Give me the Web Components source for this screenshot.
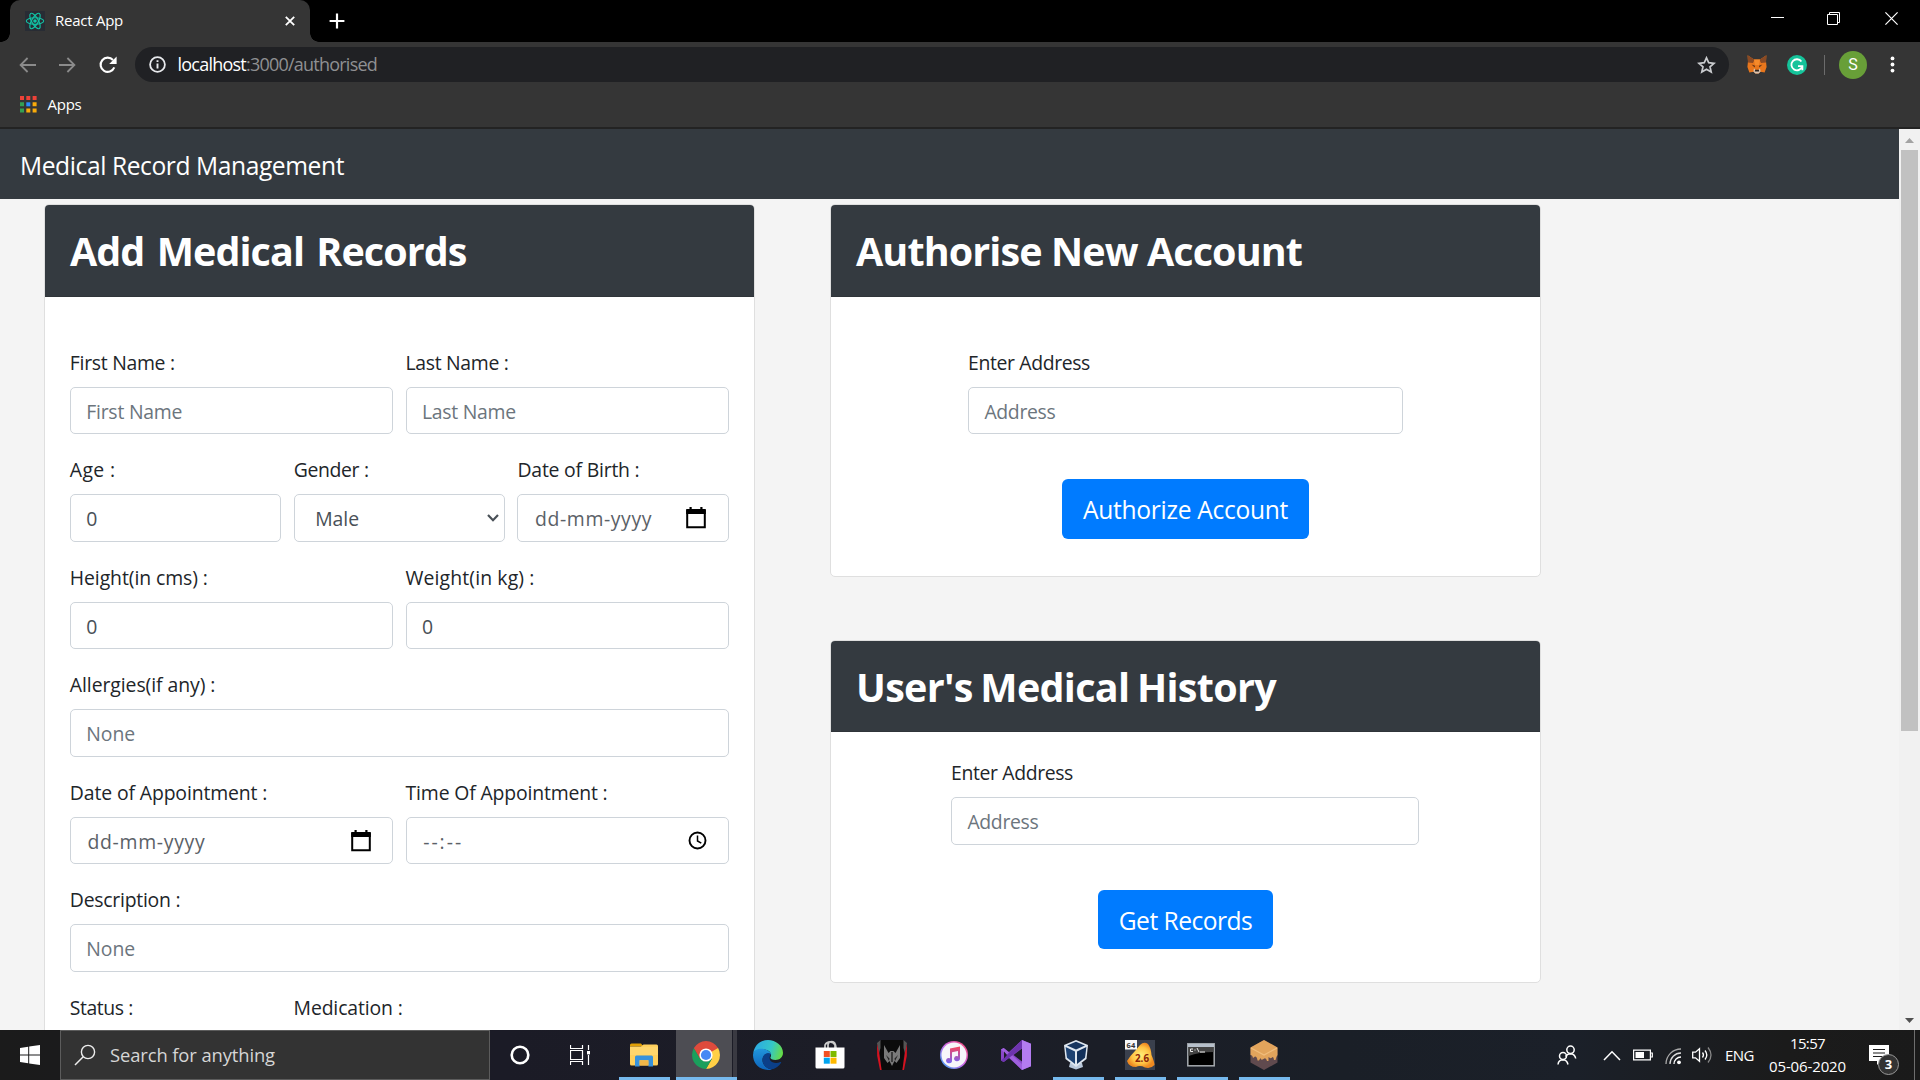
<!DOCTYPE html>
<html lang="en">
<head>
<meta charset="utf-8">
<title>React App</title>
<style>
html,body{margin:0;height:100%;overflow:hidden}
body{font-family:"Open Sans","Noto Sans",sans-serif;background:#f4f4f4}
</style>
</head>
<body>
<desktop-screen></desktop-screen>
<script>
const define=(name,html,extra)=>{
  const t=document.createElement('template');t.innerHTML=html;
  customElements.define(name,class extends HTMLElement{
    connectedCallback(){
      if(!this.shadowRoot){
        this.attachShadow({mode:'open'}).appendChild(t.content.cloneNode(true));
        if(extra)extra(this,this.shadowRoot);
      }
    }
  });
};

/* Text run spaced out to a given width */
define('fit-text',`<style>:host{display:inline-block;white-space:pre;flex:none}</style><span></span>`,(el,r)=>{
  const s=r.querySelector('span'),w=+el.getAttribute('w');
  s.textContent=el.getAttribute('t');
  const n=s.getBoundingClientRect().width;
  if(w&&n)s.style.letterSpacing=((w-n)/s.textContent.length)+'px';
  if(w)el.style.width=w+'px';
});

const ICONS={
react:[20,20,`<rect width="20" height="20" fill="#282c34"/><g fill="none" stroke="#12c2a4" stroke-width="1.15"><ellipse cx="10" cy="10" rx="8.7" ry="3.3"/><ellipse cx="10" cy="10" rx="8.7" ry="3.3" transform="rotate(60 10 10)"/><ellipse cx="10" cy="10" rx="8.7" ry="3.3" transform="rotate(120 10 10)"/></g><circle cx="10" cy="10" r="1.8" fill="#12c2a4"/>`],
x:[10,10,`<path d="M.8.8 9.2 9.2M9.2.8.8 9.2" stroke="#fff" stroke-width="1.8"/>`],
plus:[16,16,`<path d="M8 .6V15.4M.6 8H15.4" stroke="#fff" stroke-width="2.2"/>`],
min:[13,13,`<path d="M0 5.5H13" stroke="#fff"/>`],
restore:[13,13,`<path d="M.5 2.5H10.5V12.5H.5ZM2.5 2.5V.5H12.5V10.5H10.5" fill="none" stroke="#fff"/>`],
close:[13,13,`<path d="M.4.4 12.6 12.6M12.6.4.4 12.6" stroke="#fff" stroke-width="1.2"/>`],
back:[17,16,`<path d="M17 8H1.8M8.6 1 1.6 8 8.6 15" fill="none" stroke="#8b8b8b" stroke-width="1.8"/>`],
fwd:[17,16,`<path d="M0 8H15.2M8.4 1 15.4 8 8.4 15" fill="none" stroke="#8b8b8b" stroke-width="1.8"/>`],
reload:[18,18,`<path d="M15.3 11.4A7.1 7.1 0 1 1 14 4" fill="none" stroke="#fff" stroke-width="2.1"/><path d="M17.6.6V8H10.2Z" fill="#fff"/>`],
info:[17,17,`<circle cx="8.5" cy="8.5" r="7.4" fill="none" stroke="#e8eaed" stroke-width="1.8"/><path d="M8.5 7.4V12.6M8.5 4.2V6" stroke="#e8eaed" stroke-width="1.9"/>`],
star:[19,18,`<path d="M9.5 1.8 11.7 6.7 17 7.3 13 10.8 14.2 16 9.5 13.2 4.8 16 6 10.8 2 7.3 7.3 6.7Z" fill="none" stroke="#c9cbce" stroke-width="1.7"/>`],
fox:[20,19,`<path d="M.6.3 7 4.6H13L19.4.3 19 6.3 19.6 12 17.6 17.6 13.4 16.8 11.6 18.5H8.4L6.6 16.8 2.4 17.6.4 12 1 6.3Z" fill="#e8761c"/><path d="M.6.3 7.6 4.7 6 8 1 7.4ZM19.4.3 12.4 4.7 14 8 19 7.4Z" fill="#8a4a24"/><path d="M4.6 9.6 8 10.8 7.6 12.4ZM15.4 9.6 12 10.8 12.4 12.4Z" fill="#553018"/><path d="M7 13.2 8.5 15H11.5L13 13.2 13.6 16.6 11.6 18.5H8.4L6.4 16.6Z" fill="#d9c3b0"/><path d="M8.2 14.8H11.8L12.2 16.6H7.8Z" fill="#2b2420"/><path d="M7 4.6H13L12 10H8Z" fill="#f58a2a"/>`],
gram:[20,20,`<circle cx="10" cy="10" r="10" fill="#15c39a"/><path d="M14.4 6.6A5.5 5.5 0 1 0 15.2 11.2H11M15.4 11V15.2" fill="none" stroke="#fff" stroke-width="1.8"/>`],
dots:[5,17,`<g fill="#fff"><circle cx="2.5" cy="2.4" r="1.9"/><circle cx="2.5" cy="8.5" r="1.9"/><circle cx="2.5" cy="14.6" r="1.9"/></g>`],
apps:[17,17,`<g><path d="M0 0h4v4H0zM6.3 0h4v4h-4zM12.6 0h4v4h-4z" fill="#ee4238"/><path d="M0 6.3h4v4H0zM0 12.6h4v4H0z" fill="#34a053"/><path d="M6.3 6.3h4v4h-4z" fill="#2a8cff"/><path d="M12.6 6.3h4v4h-4zM6.3 12.6h4v4h-4zM12.6 12.6h4v4h-4z" fill="#f9ab0a"/></g>`],
up:[9,5,`<path d="M0 5 4.5 0 9 5Z" fill="#a3a3a3"/>`],
down:[9,5,`<path d="M0 0 4.5 5 9 0Z" fill="#505050"/>`],
cal:[20,22,`<path d="M1.2 4H18.8V20.2H1.2Z" fill="none" stroke="#000" stroke-width="2"/><path d="M.2 2H19.8V7H.2Z" fill="#000"/><path d="M4.6 0V3M15.4 0V3" stroke="#000" stroke-width="2.2"/>`],
clock:[19,19,`<circle cx="9.5" cy="9.5" r="8" fill="none" stroke="#000" stroke-width="1.9"/><path d="M9.5 4.6V10L13.3 12.2" fill="none" stroke="#000" stroke-width="1.5"/>`],
chev:[12,8,`<path d="M1 1 6 6.2 11 1" fill="none" stroke="#495057" stroke-width="2.2"/>`],
win:[20,20,`<path d="M0 2.9 8.2 1.8V9.5H0ZM9.2 1.6 20 0V9.5H9.2ZM0 10.5H8.2V18.2L0 17.1ZM9.2 10.5H20V20L9.2 18.4Z" fill="#fff"/>`],
search:[22,22,`<circle cx="14" cy="8" r="6.6" fill="none" stroke="#eee" stroke-width="1.4"/><path d="M9.2 12.8 1 21" stroke="#eee" stroke-width="1.5"/>`],
cortana:[20,20,`<circle cx="10" cy="10" r="8.3" fill="none" stroke="#fff" stroke-width="2.6"/>`],
task:[20,20,`<path d="M.5 0V3.5H12.5V0M.5 20V16.5H12.5V20M.5 5.5H12.5V14.5H.5ZM18.5 0V5M18.5 10V20" fill="none" stroke="#fff" stroke-width="1.2"/><path d="M17 6h3v3.4h-3z" fill="#fff"/>`],
folder:[28,24,`<path d="M0 2Q0 .5 1.5.5H11L13.5 3.5H0Z" fill="#e09f06"/><path d="M0 3.5H11L13.5 1.5H26.5Q28 1.5 28 3V21Q28 22.5 26.5 22.5H1.5Q0 22.5 0 21Z" fill="#ffd05c"/><path d="M0 4H28V12H0Z" fill="#ffdc7c" opacity=".5"/><path d="M5 23.5V14Q5 12.5 6.5 12.5H21.5Q23 12.5 23 14V23.5H18.4V17.3H9.6V23.5Z" fill="#3792dc"/><path d="M9.6 17.3H18.4V22.5H9.6Z" fill="#f2b848"/>`],
chrome:[28,28,`<path d="M14 14 1.9 7A14 14 0 0 1 26.1 7Z" fill="#de4b3c"/><path d="M14 14V7H26.1A14 14 0 0 1 14 28L20 17.5Z" fill="#ffcf45"/><path d="M14 28A14 14 0 0 1 1.9 7L8 17.5 14 21 20 17.5Z" fill="#1a9f5c"/><path d="M14 7H26.1L14 14 8 17.5 1.9 7Z" fill="#de4b3c"/><circle cx="14" cy="14" r="6.6" fill="#fff"/><circle cx="14" cy="14" r="5.1" fill="#4688f4"/>`],
edge:[30,30,`<defs><linearGradient id="e1" x1="0" x2="1" y1=".3" y2=".5"><stop stop-color="#2ba9e4"/><stop offset=".6" stop-color="#35c6c8"/><stop offset="1" stop-color="#66dc48"/></linearGradient><linearGradient id="e2" x2="0" y2="1"><stop stop-color="#2196dc"/><stop offset="1" stop-color="#0d63ba"/></linearGradient></defs><path d="M.3 13.5C1 5.5 7.300 0 15 0S30 5.600 30 12.800C30 17.500 26.500 20 22.500 20 19.300 20 17.200 18.800 17.400 17.600 18.600 15.500 18.400 12 14.500 10.300 9 8 2 9.500.3 13.500Z" fill="url(#e1)"/><path d="M0 15C.2 10 5 8.500 9 8.800 14 9.200 17.500 12 18.500 14.500 14 11.500 9.500 15 9.500 20 9.500 25 14 29 19 29.400 8.500 32 0 24.500 0 15Z" fill="url(#e2)"/><path d="M18 14C13.500 12 9.500 15 9.500 20 9.500 26 15.500 30 20.500 29 24 27.800 26.800 25.300 28.200 22.600 28.400 22.100 28 21.800 27.500 22 20.500 25 13.500 20.500 18 14Z" fill="#0b3f88"/>`],
store:[30,30,`<path d="M10 9V6A5.500 5.500 0 0 1 20 6V9M13 9V5.500Q13.500 2.500 17 2.500 20.500 2.500 21 9" fill="none" stroke="#ccc" stroke-width="1.7"/><path d="M.5 8.500H29.500V28Q29.500 29.500 28 29.500H2Q.5 29.500.5 28Z" fill="#fff"/><path d="M8.800 12h6v6h-6z" fill="#f25022"/><path d="M15.500 12h6v6h-6z" fill="#7fba00"/><path d="M8.800 18.700h6v6h-6z" fill="#00a4ef"/><path d="M15.500 18.700h6v6h-6z" fill="#ffb900"/>`],
pred:[30,30,`<path d="M4 0H26L28 4 25.500 30H4.500L2 4Z" fill="#0b0b0b"/><path d="M0 3 3.500 0V8L1.800 14ZM30 3 26.500 0V8L28.200 14Z" fill="#555"/><path d="M0 4 2 12 4.600 30H3L.2 16ZM30 4 28 12 25.400 30H27L29.800 16Z" fill="#d6121f"/><path d="M7 5 11.500 13 13.500 11H16.500L18.500 13 23 5V18L19.500 23 17.500 21 15 26 12.500 21 10.500 23 7 18Z" fill="#797979"/><path d="M9 15 12.500 18.500 12 21ZM21 15 17.500 18.500 18 21ZM14.300 12H15.700V22H14.300Z" fill="#222"/>`],
itunes:[28,28,`<defs><linearGradient id="i1" x1="1" x2="0" y1="0" y2="1"><stop stop-color="#fb4569"/><stop offset=".5" stop-color="#c968e8"/><stop offset="1" stop-color="#29a9f5"/></linearGradient><linearGradient id="i2" x2="0" y2="1"><stop stop-color="#f8455e"/><stop offset="1" stop-color="#7565f5"/></linearGradient></defs><circle cx="14" cy="14" r="14" fill="url(#i1)"/><circle cx="14" cy="14" r="12.500" fill="#f6f5fa"/><path d="M10 7.500 20 5.500V17.500A3 2.600 0 1 1 18 15.300V10L12 11.200V19.500A3 2.600 0 1 1 10 17.200Z" fill="url(#i2)"/>`],
vs:[30,30,`<path d="M21 0 30 3.700V26.300L21 30 8 18 2.700 22 0 20.600V9.400L2.700 8 8 12Z" fill="#8a47c9"/><path d="M21 0 30 3.700V26.300L21 30Z" fill="#b37cf0"/><path d="M0 9.400 2.700 8 21 24V30Z" fill="#9f61dd"/><path d="M21 0V8L2.700 22 0 20.600Z" fill="#6d34ae"/><path d="M21 8.600V21.400L12.500 15ZM3 11.500 6 15 3 18.500Z" fill="#1c1d27"/>`],
vbox:[26,30,`<path d="M7 23H19L20 27 13 29.500 6 27Z" fill="#b8c7da"/><path d="M13 0 25 5 23.500 19 13 27 2.500 19 1 5Z" fill="#dfe7f0"/><path d="M13 1.800 22 5.400 13 9.600 4 5.400Z" fill="#17355f"/><path d="M2.600 7 12 11.500V24L4 17.800Z" fill="#1d4272"/><path d="M23.400 7 14 11.500V24L22 17.800Z" fill="#12305a"/>`],
blend:[30,30,`<defs><radialGradient id="b1"><stop stop-color="#fff07a"/><stop offset=".65" stop-color="#ffc444"/><stop offset="1" stop-color="#ef8a21"/></radialGradient></defs><rect width="30" height="30" fill="#3a404d"/><path d="M15 5Q19 1 23 4 26 8 26.500 15 29.500 22 29.500 25 26 29 20 27.500 15 25 11 27 4 27 2 21 5 16 10 11Z" fill="url(#b1)"/><rect width="12" height="9.500" fill="#f7f7f7"/><text x="1.600" y="7.700" font-family="Open Sans" font-weight="700" font-size="7.500" fill="#333">64</text><text x="10" y="22.400" font-family="Open Sans" font-weight="700" font-size="9.800" fill="#8b2409">2.6</text>`],
cmd:[28,24,`<rect x=".8" y=".8" width="26.400" height="22" fill="#000" stroke="#a6abb0" stroke-width="1.500"/><path d="M1 1H27V4H1Z" fill="#b7c0cb"/><path d="M1.600 4H26.400V9Q12 9 1.600 13Z" fill="#444"/><path d="M3.500 6H6M3.500 8.500H6M3.500 6V8.500M8 6.500V7.500M10 5 12 9M13 9H18" stroke="#eee" fill="none"/>`],
gan:[28,30,`<path d="M14 0 27.500 7.500V22.500L14 30 .5 22.500V7.500Z" fill="#604a4e"/><path d="M14 0 27.500 7.500V15Q26 17 25.500 20H24Q23.500 16 22 17.500T18.500 17V21H17Q16 17 13.500 19T10.500 18L9 20.500H7.500Q7 16.500 5 16.500L3 18Q2.500 15 .5 15V7.500Z" fill="#e2a45c"/><path d="M1 8 14 15 27 8" fill="none" stroke="#f0bd7c" stroke-width="1.200"/>`],
people:[20,20,`<g fill="none" stroke="#fff" stroke-width="1.500"><circle cx="13.500" cy="4.800" r="3.700"/><path d="M8.500 11.500Q10.500 8.700 13.500 8.700 18 9 18.700 13.500"/><circle cx="6" cy="11" r="3.500"/><path d="M1 19.500Q1.500 15 6 14.800 10 15 11 19.500"/></g>`],
caret:[18,11,`<path d="M1 10 9 1.800 17 10" fill="none" stroke="#fff" stroke-width="1.500"/>`],
batt:[20,12,`<path d="M.6 1.100H17.400V10.900H.6ZM17.400 4H19.300V8H17.400" fill="none" stroke="#fff" stroke-width="1.200"/><path d="M2.500 3H11V9H2.500Z" fill="#fff"/>`],
wifi:[17,17,`<g fill="none" stroke-width="1.300"><path d="M1 16A15 15 0 0 1 16 1" stroke="#aaa"/><path d="M5 16A11 11 0 0 1 16 5" stroke="#ddd"/><path d="M9 16A7 7 0 0 1 16 9" stroke="#fff"/></g><circle cx="14" cy="14.300" r="1.900" fill="#fff"/>`],
vol:[21,18,`<g fill="none" stroke="#fff" stroke-width="1.300"><path d="M.7 6.200H3.500L7.500 2.700V15.300L3.500 11.800H.7Z"/><path d="M10.500 6.500Q12.500 9 10.500 11.500M13 4.500Q16.600 9 13 13.500"/><path d="M16 1.500Q22 9 16 16.500" stroke="#888"/></g>`],
note:[20,20,`<path d="M0 0H20V16H12L8 20V16H0Z" fill="#fff"/><path d="M4 4.500H16M4 8H16M4 11.500H16" stroke="#1c1c1c" stroke-width="1.200"/>`]
};
define('ui-icon',`<style>:host{display:block;flex:none}svg{display:block}</style>`,(el,r)=>{
  const [w,h,s]=ICONS[el.getAttribute('name')];
  const d=document.createElement('div');
  d.innerHTML=`<svg width="${w}" height="${h}" viewBox="0 0 ${w} ${h}">${s}</svg>`;
  r.appendChild(d);
});

define('browser-tabs',`<style>
:host{display:flex;height:42px;background:#000;color:#fff}
.tab{position:relative;margin-left:10px;width:300px;height:42px;background:#353535;border-radius:10px 10px 0 0;display:flex;align-items:center;box-sizing:border-box;padding:0 15px}
.tab:before,.tab:after{content:"";position:absolute;bottom:0;width:9px;height:9px}
.tab:before{left:-9px;background:radial-gradient(circle at 0 0,#000 8.500px,#353535 9px)}
.tab:after{right:-9px;background:radial-gradient(circle at 100% 0,#000 8.500px,#353535 9px)}
fit-text{margin-left:10px;font-size:15px;line-height:20px;margin-top:-2px}
.tab ui-icon:last-child{margin-left:auto}
.plus{margin:13px 0 0 19px}
.win{margin:12px 22px 0 auto;display:flex;gap:44px}
.win ui-icon:nth-child(2){margin-right:1px}.win ui-icon:nth-child(1){margin-right:-1px}
</style>
<div class="tab"><ui-icon name="react"></ui-icon><fit-text t="React App" w="68"></fit-text><ui-icon name="x"></ui-icon></div>
<ui-icon class="plus" name="plus"></ui-icon>
<div class="win"><ui-icon name="min"></ui-icon><ui-icon name="restore"></ui-icon><ui-icon name="close"></ui-icon></div>`);

define('browser-toolbar',`<style>
:host{display:flex;height:45px;background:#353535;align-items:center;box-sizing:border-box;padding:0 25px 0 19px}
.nav{display:flex;align-items:center;gap:23px;width:116px}
.omni{display:flex;align-items:center;width:1594px;height:35px;border-radius:18px;background:#202124;box-sizing:border-box;padding:0 13.500px 0 14px;font-size:18px;line-height:24px;color:#fff}
.omni fit-text{margin-top:-2px}
.omni fit-text:nth-of-type(1){margin-left:11.500px}
.path{color:#8f9092}
.star{margin-left:auto}
.ext{display:flex;align-items:center;flex:1;margin-left:17.500px}
.sep{width:1px;height:20px;background:#6c6c6c;margin:0 14px 0 17.500px}
.av{width:28px;height:28px;border-radius:50%;background:#689f38;color:#fff;font:16px/28px Roboto,sans-serif;text-align:center}
.dots{margin-left:auto}
</style>
<div class="nav"><ui-icon name="back"></ui-icon><ui-icon name="fwd"></ui-icon><ui-icon name="reload"></ui-icon></div>
<div class="omni"><ui-icon name="info"></ui-icon><fit-text t="localhost" w="68.500"></fit-text><fit-text class="path" t=":3000/authorised" w="131"></fit-text><ui-icon class="star" name="star"></ui-icon></div>
<div class="ext"><ui-icon name="fox"></ui-icon><ui-icon name="gram" style="margin-left:20px"></ui-icon><div class="sep"></div><div class="av">S</div><ui-icon class="dots" name="dots"></ui-icon></div>`);

define('bookmark-bar',`<style>
:host{display:flex;height:42px;background:#353535;border-bottom:2px solid #232323;box-sizing:border-box;padding:8px 20px 0;color:#fff;font-size:15px;line-height:20px}
ui-icon{margin-top:1px}fit-text{margin-left:10.500px;margin-top:-1px}
</style><ui-icon name="apps"></ui-icon><fit-text t="Apps" w="34"></fit-text>`);

define('page-scrollbar',`<style>
:host{display:flex;flex-direction:column;align-items:center;width:21px;background:#f1f1f1;justify-content:space-between}
.t{display:flex;flex-direction:column;align-items:center;gap:7px;padding-top:9px}
.th{width:17px;height:581px;background:#c1c1c1}
.d{padding-bottom:7px}
</style><div class="t"><ui-icon name="up"></ui-icon><div class="th"></div></div><ui-icon class="d" name="down"></ui-icon>`);

define('nav-bar',`<style>
:host{display:flex;height:70px;background:#343a40;color:#fff;padding-left:20px;box-sizing:border-box;font-size:24.600px;line-height:34px;padding-top:20px}
</style><fit-text t="Medical Record Management" w="324"></fit-text>`);

define('record-card',`<style>
:host{display:block;box-sizing:border-box;width:711px;background:#fff;border:1px solid #dfdfdf;border-radius:5px}
header{height:var(--head,92px);box-sizing:border-box;background:#343a40;border-bottom:1px solid #2f3439;border-radius:4px 4px 0 0;padding:18px 25px 0;color:#fff;font-weight:700;font-size:39.500px;line-height:56px;word-spacing:var(--gap,0)}
.body{padding:0 25px}
</style><header></header><div class="body"><slot></slot></div>`,(el,r)=>{
  r.querySelector('header').innerHTML=`<fit-text t="${el.getAttribute('heading')}" w="${el.getAttribute('hw')}"></fit-text>`;
});

define('form-row',`<style>:host{display:flex;gap:12.500px;height:107.500px;margin:0 .2px 0 -.2px}::slotted(*){flex:1}</style><slot></slot>`);

define('form-field',`<style>
:host{display:block;min-width:0}
label{display:block;height:40px;font-size:19.400px;line-height:31px;color:#212529;white-space:nowrap}
.in{display:flex;align-items:center;box-sizing:border-box;height:47.500px;border:1px solid #ced4da;border-radius:5px;background:#fff;padding:0 21px 0 15.400px;font-size:19.400px;line-height:30px;color:#6c757d}
.in.v,.in.s,.in.d,.in.t{color:#495057}
.in.s{padding:0 5px 0 20.500px}
.in.d,.in.t{color:#5b6167;padding:0 21.500px 0 16.600px}
.in.t{padding-right:21px}
.in ui-icon{margin-left:auto}
.in fit-text{margin-top:var(--drop,2px)}
</style><label></label><div class="in"></div>`,(el,r)=>{
  const a=n=>el.getAttribute(n),k=a('kind')||'p',i=r.querySelector('.in');
  if(a('label'))r.querySelector('label').innerHTML=`<fit-text t="${a('label')}" w="${a('lw')}"></fit-text>`;
  i.className='in '+k;
  if(a('value'))i.innerHTML=`<fit-text t="${a('value')}" w="${a('vw')}"></fit-text>`+(k==='s'?'<ui-icon name="chev"></ui-icon>':k==='d'?'<ui-icon name="cal"></ui-icon>':k==='t'?'<ui-icon name="clock"></ui-icon>':'');
});

define('primary-button',`<style>
:host{display:block;margin:0 auto}
div{box-sizing:border-box;height:var(--bh,60px);background:#007bff;border-radius:6px;color:#fff;font-size:24.600px;line-height:36px;padding:13px 0 0;text-align:center}
</style><div></div>`,(el,r)=>{
  el.style.width=el.getAttribute('bw')+'px';
  r.querySelector('div').innerHTML=`<fit-text t="${el.getAttribute('text')}" w="${el.getAttribute('tw')}"></fit-text>`;
});

define('medical-page',`<style>
:host{display:flex;height:901px;overflow:hidden;background:#f4f4f4}
main{flex:1;min-width:0}
.cols{display:flex;padding:5px 0 0 44px;gap:75px}
.right{display:flex;flex-direction:column;gap:63px}
.add{height:1200px;--gap:3px}
.rows{padding-top:49.900px}
.auth{height:373px}.hist{height:343px;--head:91px;--gap:-2px;--bh:59px}
.a{width:435px;margin:49.900px auto 44.600px}
.h{width:468px;margin:25px auto 45px;padding-right:1px;--drop:3px}
</style>
<main><nav-bar></nav-bar><div class="cols">
<record-card class="add" heading="Add Medical Records" hw="396.500"><div class="rows">
<form-row><form-field label="First Name :" lw="105" value="First Name" vw="96"></form-field><form-field label="Last Name :" lw="103" value="Last Name" vw="94"></form-field></form-row>
<form-row><form-field label="Age :" lw="45.500" value="0" vw="11" kind="v"></form-field><form-field label="Gender :" lw="75" value="Male" vw="44" kind="s"></form-field><form-field label="Date of Birth :" lw="122" value="dd-mm-yyyy" vw="117" kind="d"></form-field></form-row>
<form-row><form-field label="Height(in cms) :" lw="138" value="0" vw="11" kind="v"></form-field><form-field label="Weight(in kg) :" lw="129" value="0" vw="11" kind="v"></form-field></form-row>
<form-row><form-field label="Allergies(if any) :" lw="145.500" value="None" vw="49"></form-field></form-row>
<form-row><form-field label="Date of Appointment :" lw="197.500" value="dd-mm-yyyy" vw="118" kind="d"></form-field><form-field label="Time Of Appointment :" lw="202" value="--:--" vw="40" kind="t"></form-field></form-row>
<form-row><form-field label="Description :" lw="110.500" value="None" vw="49"></form-field></form-row>
<form-row><form-field label="Status :" lw="63"></form-field><form-field label="Medication :" lw="109" style="flex:2.060"></form-field></form-row>
</div></record-card>
<div class="right">
<record-card class="auth" heading="Authorise New Account" hw="446"><form-field class="a" label="Enter Address" lw="122" value="Address" vw="71"></form-field><primary-button bw="247" text="Authorize Account" tw="205"></primary-button></record-card>
<record-card class="hist" heading="User's Medical History" hw="420"><form-field class="h" label="Enter Address" lw="122" value="Address" vw="71"></form-field><primary-button bw="175" text="Get Records" tw="133.500"></primary-button></record-card>
</div></div></main><page-scrollbar></page-scrollbar>`);

define('task-item',`<style>
:host{display:flex;width:62px;height:50px;align-items:center;justify-content:center;position:relative;flex:none}
:host([open]):after{content:"";position:absolute;left:6px;width:51px;bottom:0;height:3px;background:#76b9ed}
:host([active]){background:linear-gradient(#4d4d53,#4d4d53) 1px 0/56px 100% no-repeat,linear-gradient(#3a3a42,#3a3a42) 58px 0/4px 100% no-repeat}
:host([active]):after{left:1px;width:61px}
</style><slot></slot>`);

define('task-bar',`<style>
:host{display:flex;height:50px;background:linear-gradient(90deg,#1b1b1b,#1b1b1c 3%,#1b1b26 26%,#1c1d27 45%,#1a1f27 70%,#1b2029 82%,#1b1b1b 93%,#1a1a1a);color:#fff;position:relative}
.start{width:60px;display:flex;align-items:center;justify-content:center}
.search{width:430px;box-sizing:border-box;background:#333;border:1px solid #5c5c5c;display:flex;align-items:center;padding-left:13px;font-size:18.400px;line-height:24px;color:#d6d6d6}
.search fit-text{margin-left:14px;margin-top:-1px}
.items{display:flex;margin-left:-1px}
.tray{margin-left:auto;display:flex;align-items:center}
.lang{font-size:15px;margin:0 15px 0 12px;line-height:20px}
.clk{width:77px;font-size:15px;line-height:23px;display:flex;flex-direction:column;align-items:center;margin-top:-1px}
.note{position:relative;margin:-1px 0 0 23px}
.badge{position:absolute;left:9px;top:9px;width:19px;height:19px;box-sizing:content-box;border:1px solid #999;border-radius:50%;background:#333;font:700 13px/19px "Open Sans",sans-serif;text-align:center}
.end{width:1px;height:50px;background:#6e6e6e;margin:0 5px 0 25px}
</style>
<div class="start"><ui-icon name="win"></ui-icon></div>
<div class="search"><ui-icon name="search"></ui-icon><fit-text t="Search for anything" w="165"></fit-text></div>
<div class="items">
<task-item><ui-icon name="cortana"></ui-icon></task-item><task-item><ui-icon name="task" style="margin-right:4px"></ui-icon></task-item>
<task-item open><ui-icon name="folder"></ui-icon></task-item><task-item open active><ui-icon name="chrome"></ui-icon></task-item>
<task-item><ui-icon name="edge"></ui-icon></task-item><task-item><ui-icon name="store" style="margin-top:-2px"></ui-icon></task-item>
<task-item><ui-icon name="pred"></ui-icon></task-item><task-item><ui-icon name="itunes"></ui-icon></task-item>
<task-item><ui-icon name="vs"></ui-icon></task-item><task-item open><ui-icon name="vbox" style="margin-right:4px"></ui-icon></task-item>
<task-item open><ui-icon name="blend"></ui-icon></task-item><task-item open><ui-icon name="cmd" style="margin:-1px 2px 0 0"></ui-icon></task-item>
<task-item open><ui-icon name="gan"></ui-icon></task-item></div>
<div class="tray"><ui-icon name="people"></ui-icon><ui-icon name="caret" style="margin-left:26px"></ui-icon><ui-icon name="batt" style="margin-left:12px"></ui-icon><ui-icon name="wifi" style="margin-left:12px;margin-top:2px"></ui-icon><ui-icon name="vol" style="margin-left:10px"></ui-icon>
<fit-text class="lang" t="ENG" w="29"></fit-text><div class="clk"><fit-text t="15:57" w="35"></fit-text><fit-text t="05-06-2020" w="77"></fit-text></div>
<div class="note"><ui-icon name="note"></ui-icon><div class="badge">3</div></div><div class="end"></div></div>`);

define('desktop-screen',`<style>:host{display:flex;flex-direction:column;width:1920px;height:1080px;overflow:hidden}</style>
<browser-tabs></browser-tabs><browser-toolbar></browser-toolbar><bookmark-bar></bookmark-bar><medical-page></medical-page><task-bar></task-bar>`);
</script>
</body>
</html>
